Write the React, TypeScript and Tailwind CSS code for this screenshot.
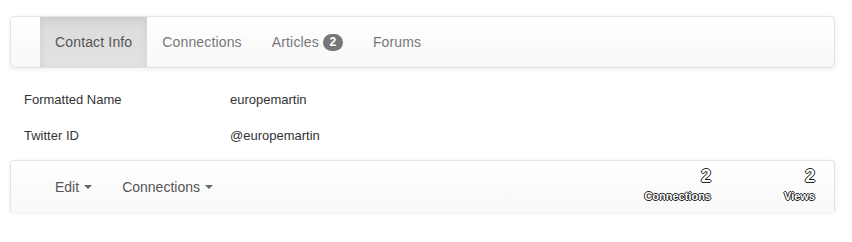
const tabs = [
  { label: 'Contact Info', active: true },
  { label: 'Connections' },
  { label: 'Articles', badge: '2' },
  { label: 'Forums' },
];

const details = [
  { name: 'Formatted Name', value: 'europemartin' },
  { name: 'Twitter ID', value: '@europemartin' },
];

const stats = [
  { value: '2', label: 'Connections' },
  { value: '2', label: 'Views' },
];

const outline = '[text-shadow:-1px_0_#222,1px_0_#222,0_-1px_#222,0_1px_#222]';

const Caret = () => (
  <span className="ml-[5px] inline-block h-0 w-0 border-x-4 border-t-4 border-x-transparent border-t-[#666] align-middle" />
);

export default function App() {
  return (
    <div className="h-[242px] w-[852px] overflow-hidden bg-white font-['Liberation_Sans',Arial,sans-serif] text-[14px]">
      {/* Top navbar */}
      <div className="ml-[10px] mt-[16px] flex h-[52px] w-[825px] rounded-[4px] border border-[#e3e3e3] bg-gradient-to-b from-white to-[#f8f8f8] pl-[29px] shadow-[0_1px_5px_rgba(0,0,0,0.075)]">
        {tabs.map((tab) => (
          <div
            key={tab.label}
            className={`flex h-full items-center px-[15px] leading-5 tracking-[0.15px] ${
              tab.active
                ? 'bg-gradient-to-b from-[#dbdbdb] to-[#e2e2e2] text-[#555] shadow-[inset_0_3px_9px_rgba(0,0,0,0.075)]'
                : 'text-[#777]'
            }`}
          >
            {tab.label}
            {tab.badge && (
              <span className="ml-[4px] inline-flex h-[17px] min-w-[20px] items-center justify-center rounded-[10px] bg-[#777] px-[6px] text-[12px] font-bold tracking-normal text-white">
                {tab.badge}
              </span>
            )}
          </div>
        ))}
      </div>

      {/* Details */}
      <div className="mt-[14px] pl-[24px] text-[13px] text-[#333]">
        {details.map((d) => (
          <div key={d.name} className="flex h-[36px] items-center">
            <div className="w-[206px]">{d.name}</div>
            <div>{d.value}</div>
          </div>
        ))}
      </div>

      {/* Bottom bar */}
      <div className="ml-[10px] mt-[6px] flex h-[52px] w-[825px] items-start justify-between rounded-t-[4px] border border-b-0 border-[#e3e3e3] bg-gradient-to-b from-white to-[#f8f8f8] pl-[29px] pr-[19px] shadow-[0_1px_5px_rgba(0,0,0,0.075)]">
        <div className="flex text-[#555]">
          <div className="flex items-center px-[15px] pb-[15px] pt-[16px] leading-5">
            Edit
            <Caret />
          </div>
          <div className="flex items-center px-[15px] pb-[15px] pt-[16px] leading-5">
            Connections
            <Caret />
          </div>
        </div>
        <div className="flex gap-[73px] pt-[4px]">
          {stats.map((s) => (
            <div key={s.label} className="flex flex-col items-end text-white">
              <div className={`text-[18px] font-bold leading-[22px] ${outline}`}>{s.value}</div>
              <div className={`mt-[2px] text-[11px] font-bold leading-[14px] ${outline}`}>{s.label}</div>
            </div>
          ))}
        </div>
      </div>
    </div>
  );
}
